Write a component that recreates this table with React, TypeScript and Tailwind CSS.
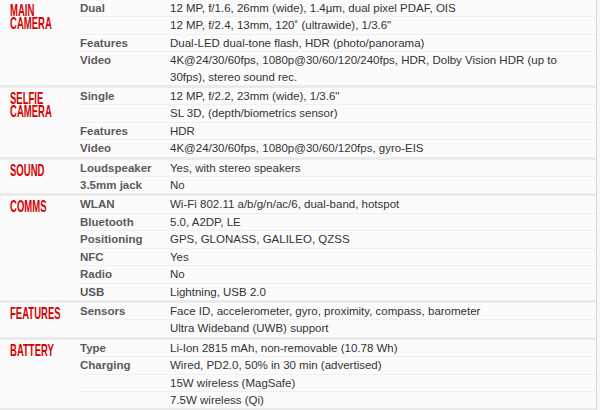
const specs: { title: string[]; rows: [string, string][] }[] = [
  {
    title: ['MAIN', 'CAMERA'],
    rows: [
      ['Dual', '12 MP, f/1.6, 26mm (wide), 1.4µm, dual pixel PDAF, OIS'],
      ['', '12 MP, f/2.4, 13mm, 120˚ (ultrawide), 1/3.6"'],
      ['Features', 'Dual-LED dual-tone flash, HDR (photo/panorama)'],
      ['Video', '4K@24/30/60fps, 1080p@30/60/120/240fps, HDR, Dolby Vision HDR (up to 30fps), stereo sound rec.'],
    ],
  },
  {
    title: ['SELFIE', 'CAMERA'],
    rows: [
      ['Single', '12 MP, f/2.2, 23mm (wide), 1/3.6"'],
      ['', 'SL 3D, (depth/biometrics sensor)'],
      ['Features', 'HDR'],
      ['Video', '4K@24/30/60fps, 1080p@30/60/120fps, gyro-EIS'],
    ],
  },
  {
    title: ['SOUND'],
    rows: [
      ['Loudspeaker', 'Yes, with stereo speakers'],
      ['3.5mm jack', 'No'],
    ],
  },
  {
    title: ['COMMS'],
    rows: [
      ['WLAN', 'Wi-Fi 802.11 a/b/g/n/ac/6, dual-band, hotspot'],
      ['Bluetooth', '5.0, A2DP, LE'],
      ['Positioning', 'GPS, GLONASS, GALILEO, QZSS'],
      ['NFC', 'Yes'],
      ['Radio', 'No'],
      ['USB', 'Lightning, USB 2.0'],
    ],
  },
  {
    title: ['FEATURES'],
    rows: [
      ['Sensors', 'Face ID, accelerometer, gyro, proximity, compass, barometer'],
      ['', 'Ultra Wideband (UWB) support'],
    ],
  },
  {
    title: ['BATTERY'],
    rows: [
      ['Type', 'Li-Ion 2815 mAh, non-removable (10.78 Wh)'],
      ['Charging', 'Wired, PD2.0, 50% in 30 min (advertised)'],
      ['', '15W wireless (MagSafe)'],
      ['', '7.5W wireless (Qi)'],
    ],
  },
]

export default function App() {
  return (
    <div className="w-[600px] h-[410px] overflow-hidden bg-[#f7f7f7] font-['Liberation_Sans',Arial,sans-serif]">
      <div className="w-[597px] bg-[#fbfbfb] border-r border-[#dcdcdc]">
        {specs.map((section) => (
          <div key={section.title.join(' ')} className="flex border-b-[3px] border-[#ebebeb]">
            <div className="w-[80px] shrink-0 pl-[10px] pt-[4px]">
              <div className="origin-left scale-x-[0.56] text-[17px] font-bold leading-[13px] text-[#d50000] whitespace-nowrap">
                {section.title.map((t) => (
                  <div key={t}>{t}</div>
                ))}
              </div>
            </div>
            <div className="flex-1">
              {section.rows.map(([label, value], i) => (
                <div
                  key={i}
                  className="flex border-b border-[#f0f0f0] last:border-b-0 text-[11.5px] leading-[16.4px]"
                >
                  <div className="w-[90px] shrink-0 font-bold text-[#5a5a5a]">{label}</div>
                  <div className="flex-1 pr-[30px] text-[#333]">{value}</div>
                </div>
              ))}
            </div>
          </div>
        ))}
      </div>
    </div>
  )
}
